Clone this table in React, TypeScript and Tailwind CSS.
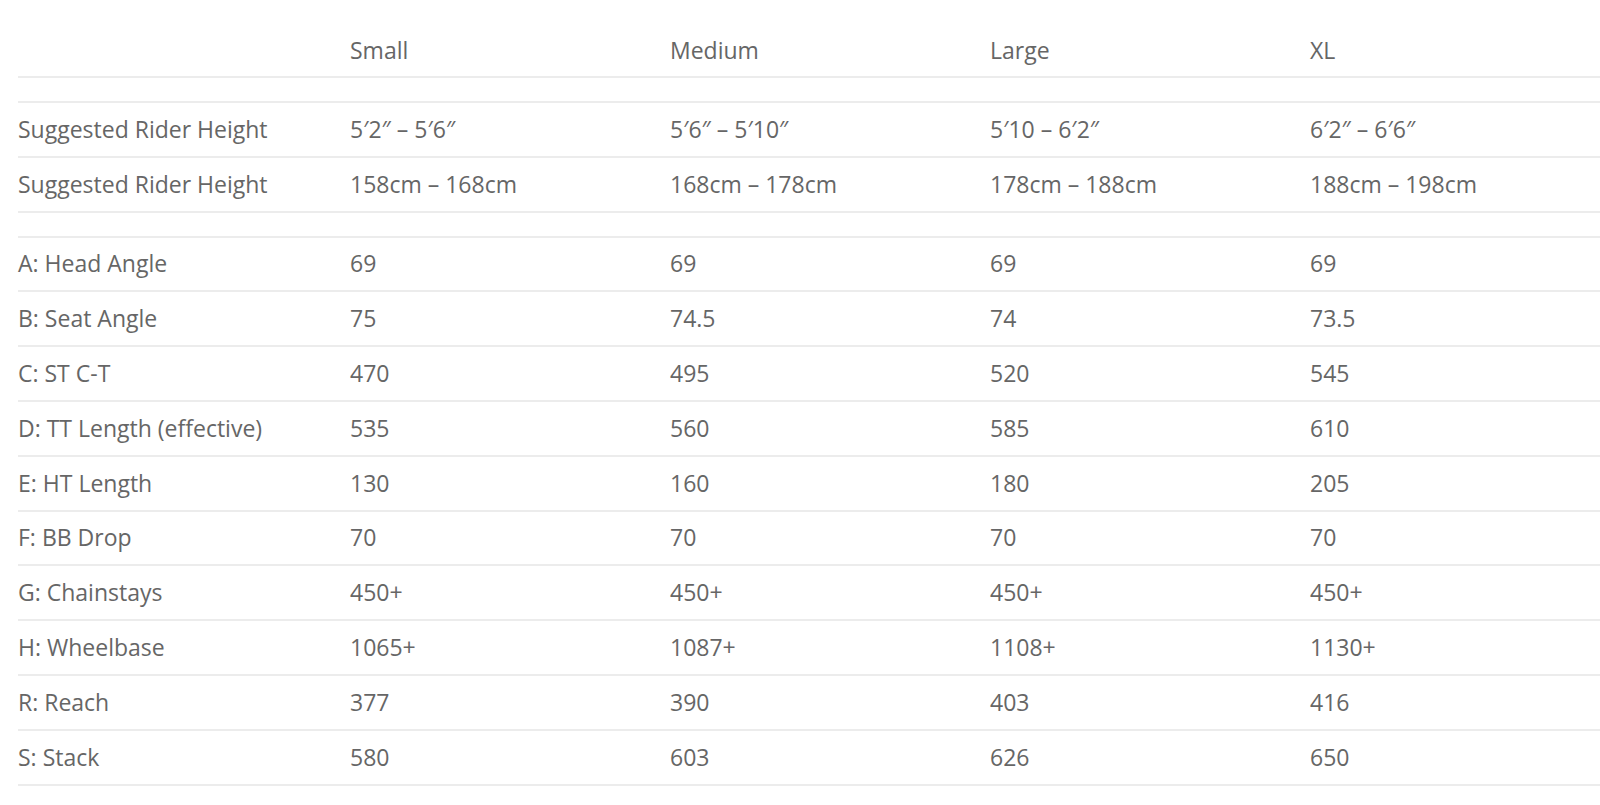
const sizes = ["Small", "Medium", "Large", "XL"];

const heightRows = [
  { label: "Suggested Rider Height", values: ["5′2″ – 5′6″", "5′6″ – 5′10″", "5′10 – 6′2″", "6′2″ – 6′6″"] },
  { label: "Suggested Rider Height", values: ["158cm – 168cm", "168cm – 178cm", "178cm – 188cm", "188cm – 198cm"] },
];

const geoRows = [
  { label: "A: Head Angle", values: ["69", "69", "69", "69"] },
  { label: "B: Seat Angle", values: ["75", "74.5", "74", "73.5"] },
  { label: "C: ST C-T", values: ["470", "495", "520", "545"] },
  { label: "D: TT Length (effective)", values: ["535", "560", "585", "610"] },
  { label: "E: HT Length", values: ["130", "160", "180", "205"] },
  { label: "F: BB Drop", values: ["70", "70", "70", "70"] },
  { label: "G: Chainstays", values: ["450+", "450+", "450+", "450+"] },
  { label: "H: Wheelbase", values: ["1065+", "1087+", "1108+", "1130+"] },
  { label: "R: Reach", values: ["377", "390", "403", "416"] },
  { label: "S: Stack", values: ["580", "603", "626", "650"] },
];

function Row({ label, values }: { label: string; values: string[] }) {
  return (
    <div className="grid grid-cols-[332px_320px_320px_320px_320px] h-[54.8px] items-center border-b-2 border-[#ececec]">
      <div>{label}</div>
      {values.map((v, i) => (
        <div key={i}>{v}</div>
      ))}
    </div>
  );
}

function Spacer() {
  return <div className="h-[25px] border-b-2 border-[#ececec]" />;
}

export default function App() {
  return (
    <div className="min-h-screen w-full overflow-hidden bg-white pl-[18px] text-[23px] leading-none text-[#666666] [font-family:'Open_Sans',sans-serif]">
      <div className="w-[1620px]">
        <div className="grid grid-cols-[332px_320px_320px_320px_320px] h-[78px] pt-[25px] items-center border-b-2 border-[#ececec]">
          <div />
          {sizes.map((s) => (
            <div key={s}>{s}</div>
          ))}
        </div>
        <Spacer />
        {heightRows.map((r, i) => (
          <Row key={i} {...r} />
        ))}
        <Spacer />
        {geoRows.map((r) => (
          <Row key={r.label} {...r} />
        ))}
      </div>
    </div>
  );
}
